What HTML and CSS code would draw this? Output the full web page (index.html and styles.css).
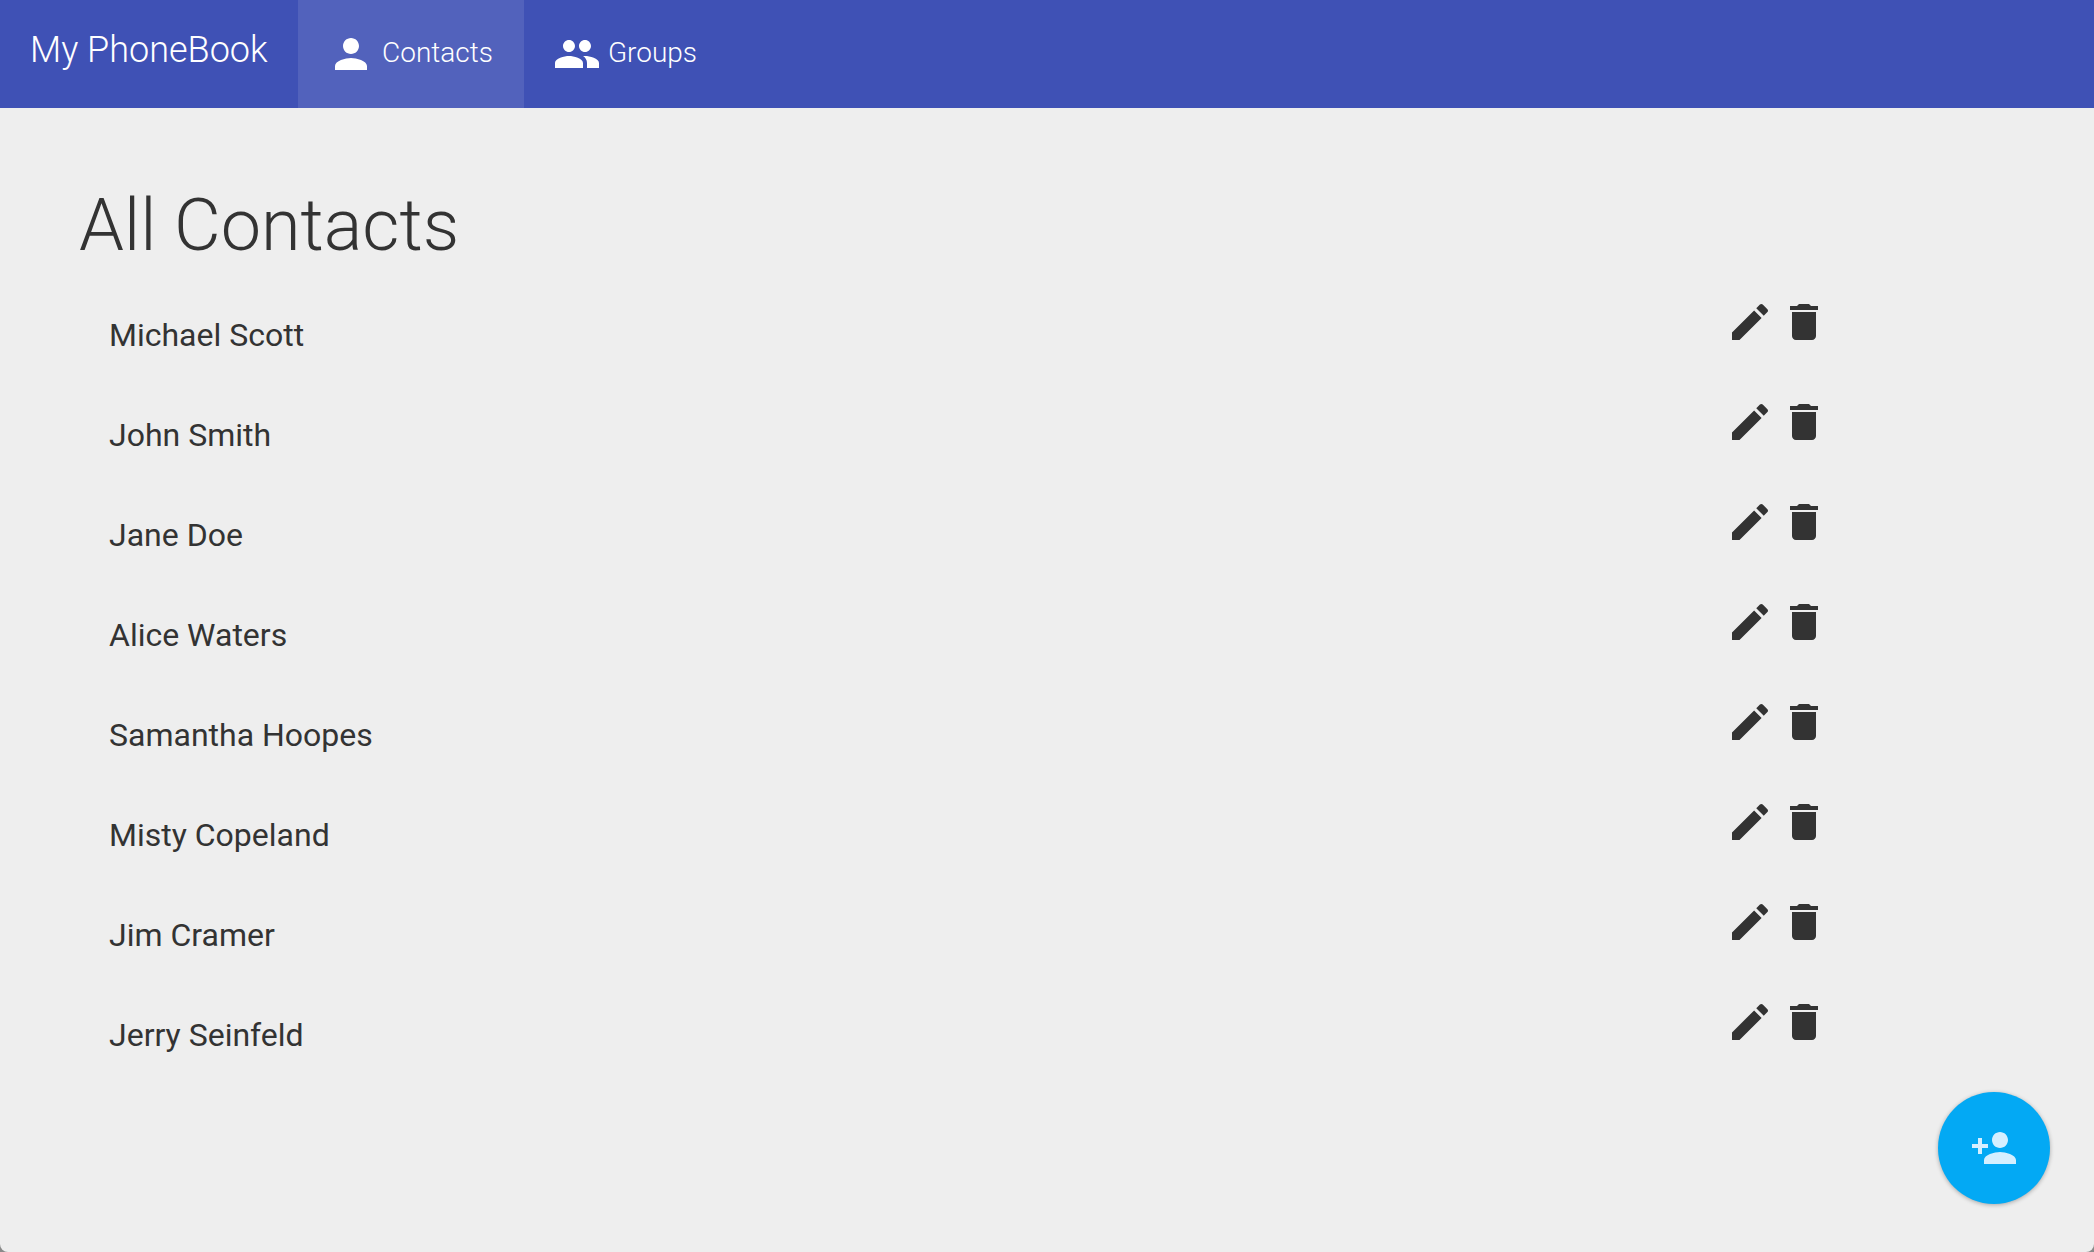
FILE: index.html
```html
<!DOCTYPE html>
<html lang="en">

<head>
    <meta charset="UTF-8">
    <meta name="viewport" content="width=device-width, initial-scale=1.0">
    <title>My PhoneBook</title>

    <link rel="stylesheet" href="styles.css">
</head>

<body>
    <header class="navbar">
        <a class="brand" href="#">My PhoneBook</a>
        <a class="tab active" href="#">
            <svg class="ico" viewBox="0 0 24 24"><path d="M12 12c2.21 0 4-1.79 4-4s-1.79-4-4-4-4 1.79-4 4 1.79 4 4 4zm0 2c-2.67 0-8 1.34-8 4v2h16v-2c0-2.66-5.33-4-8-4z"/></svg>
            Contacts
        </a>
        <a class="tab" href="#">
            <svg class="ico" viewBox="0 0 24 24"><path d="M16 11c1.66 0 2.99-1.34 2.99-3S17.66 5 16 5c-1.66 0-3 1.34-3 3s1.34 3 3 3zm-8 0c1.66 0 2.99-1.34 2.99-3S9.66 5 8 5C6.34 5 5 6.34 5 8s1.34 3 3 3zm0 2c-2.33 0-7 1.17-7 3.5V19h14v-2.5c0-2.33-4.67-3.5-7-3.5zm8 0c-.29 0-.62.02-.97.05 1.16.84 1.97 1.97 1.97 3.45V19h6v-2.5c0-2.33-4.67-3.5-7-3.5z"/></svg>
            Groups
        </a>
    </header>

    <main class="content">
        <h1 class="title">All Contacts</h1>

        <ul class="contacts">
            <li class="contact">
                <span class="name">Michael Scott</span>
                <span class="actions">
                    <svg class="ico" viewBox="0 0 24 24"><path d="M3 17.25V21h3.75L17.81 9.94l-3.75-3.75L3 17.25zM20.71 7.04c.39-.39.39-1.02 0-1.41l-2.34-2.34c-.39-.39-1.02-.39-1.41 0l-1.83 1.83 3.75 3.75 1.83-1.83z"/></svg>
                    <svg class="ico" viewBox="0 0 24 24"><path d="M6 19c0 1.1.9 2 2 2h8c1.1 0 2-.9 2-2V7H6v12zM19 4h-3.5l-1-1h-5l-1 1H5v2h14V4z"/></svg>
                </span>
            </li>
            <li class="contact">
                <span class="name">John Smith</span>
                <span class="actions">
                    <svg class="ico" viewBox="0 0 24 24"><path d="M3 17.25V21h3.75L17.81 9.94l-3.75-3.75L3 17.25zM20.71 7.04c.39-.39.39-1.02 0-1.41l-2.34-2.34c-.39-.39-1.02-.39-1.41 0l-1.83 1.83 3.75 3.75 1.83-1.83z"/></svg>
                    <svg class="ico" viewBox="0 0 24 24"><path d="M6 19c0 1.1.9 2 2 2h8c1.1 0 2-.9 2-2V7H6v12zM19 4h-3.5l-1-1h-5l-1 1H5v2h14V4z"/></svg>
                </span>
            </li>
            <li class="contact">
                <span class="name">Jane Doe</span>
                <span class="actions">
                    <svg class="ico" viewBox="0 0 24 24"><path d="M3 17.25V21h3.75L17.81 9.94l-3.75-3.75L3 17.25zM20.71 7.04c.39-.39.39-1.02 0-1.41l-2.34-2.34c-.39-.39-1.02-.39-1.41 0l-1.83 1.83 3.75 3.75 1.83-1.83z"/></svg>
                    <svg class="ico" viewBox="0 0 24 24"><path d="M6 19c0 1.1.9 2 2 2h8c1.1 0 2-.9 2-2V7H6v12zM19 4h-3.5l-1-1h-5l-1 1H5v2h14V4z"/></svg>
                </span>
            </li>
            <li class="contact">
                <span class="name">Alice Waters</span>
                <span class="actions">
                    <svg class="ico" viewBox="0 0 24 24"><path d="M3 17.25V21h3.75L17.81 9.94l-3.75-3.75L3 17.25zM20.71 7.04c.39-.39.39-1.02 0-1.41l-2.34-2.34c-.39-.39-1.02-.39-1.41 0l-1.83 1.83 3.75 3.75 1.83-1.83z"/></svg>
                    <svg class="ico" viewBox="0 0 24 24"><path d="M6 19c0 1.1.9 2 2 2h8c1.1 0 2-.9 2-2V7H6v12zM19 4h-3.5l-1-1h-5l-1 1H5v2h14V4z"/></svg>
                </span>
            </li>
            <li class="contact">
                <span class="name">Samantha Hoopes</span>
                <span class="actions">
                    <svg class="ico" viewBox="0 0 24 24"><path d="M3 17.25V21h3.75L17.81 9.94l-3.75-3.75L3 17.25zM20.71 7.04c.39-.39.39-1.02 0-1.41l-2.34-2.34c-.39-.39-1.02-.39-1.41 0l-1.83 1.83 3.75 3.75 1.83-1.83z"/></svg>
                    <svg class="ico" viewBox="0 0 24 24"><path d="M6 19c0 1.1.9 2 2 2h8c1.1 0 2-.9 2-2V7H6v12zM19 4h-3.5l-1-1h-5l-1 1H5v2h14V4z"/></svg>
                </span>
            </li>
            <li class="contact">
                <span class="name">Misty Copeland</span>
                <span class="actions">
                    <svg class="ico" viewBox="0 0 24 24"><path d="M3 17.25V21h3.75L17.81 9.94l-3.75-3.75L3 17.25zM20.71 7.04c.39-.39.39-1.02 0-1.41l-2.34-2.34c-.39-.39-1.02-.39-1.41 0l-1.83 1.83 3.75 3.75 1.83-1.83z"/></svg>
                    <svg class="ico" viewBox="0 0 24 24"><path d="M6 19c0 1.1.9 2 2 2h8c1.1 0 2-.9 2-2V7H6v12zM19 4h-3.5l-1-1h-5l-1 1H5v2h14V4z"/></svg>
                </span>
            </li>
            <li class="contact">
                <span class="name">Jim Cramer</span>
                <span class="actions">
                    <svg class="ico" viewBox="0 0 24 24"><path d="M3 17.25V21h3.75L17.81 9.94l-3.75-3.75L3 17.25zM20.71 7.04c.39-.39.39-1.02 0-1.41l-2.34-2.34c-.39-.39-1.02-.39-1.41 0l-1.83 1.83 3.75 3.75 1.83-1.83z"/></svg>
                    <svg class="ico" viewBox="0 0 24 24"><path d="M6 19c0 1.1.9 2 2 2h8c1.1 0 2-.9 2-2V7H6v12zM19 4h-3.5l-1-1h-5l-1 1H5v2h14V4z"/></svg>
                </span>
            </li>
            <li class="contact">
                <span class="name">Jerry Seinfeld</span>
                <span class="actions">
                    <svg class="ico" viewBox="0 0 24 24"><path d="M3 17.25V21h3.75L17.81 9.94l-3.75-3.75L3 17.25zM20.71 7.04c.39-.39.39-1.02 0-1.41l-2.34-2.34c-.39-.39-1.02-.39-1.41 0l-1.83 1.83 3.75 3.75 1.83-1.83z"/></svg>
                    <svg class="ico" viewBox="0 0 24 24"><path d="M6 19c0 1.1.9 2 2 2h8c1.1 0 2-.9 2-2V7H6v12zM19 4h-3.5l-1-1h-5l-1 1H5v2h14V4z"/></svg>
                </span>
            </li>
        </ul>
    </main>

    <a class="fab" href="#">
        <svg class="ico" viewBox="0 0 24 24"><path d="M15 12c2.21 0 4-1.79 4-4s-1.79-4-4-4-4 1.79-4 4 1.79 4 4 4zm-9-2V7H4v3H1v2h3v3h2v-3h3v-2H6zm9 4c-2.67 0-8 1.34-8 4v2h16v-2c0-2.66-5.33-4-8-4z"/></svg>
    </a>
</body>

</html>
```

FILE: styles.css
```css
html {
    height: 100%;
    background-color: #8a8a8a;
}

body {
    margin: 0;
    height: 1252px;
    overflow: hidden;
    border-radius: 0 0 8px 8px;
    background-color: #eeeeee;
    color: #333333;
    font-family: Roboto, "Liberation Sans", sans-serif;
}

.ico {
    width: 48px;
    height: 48px;
    flex: none;
    fill: currentColor;
}

.navbar {
    display: flex;
    height: 108px;
    background-color: #3f51b5;
    color: #ffffff;
}

.navbar a {
    color: #ffffff;
    text-decoration: none;
}

.brand {
    width: 268px;
    padding: 27px 0 0 30px;
    font-size: 36px;
    line-height: 46px;
    font-weight: 300;
}

.tab {
    display: flex;
    align-items: flex-start;
    gap: 7px;
    padding: 30px 31px 0 29px;
    font-size: 28px;
    line-height: 46px;
    font-weight: 300;
}

.tab.active {
    background-color: #5262bc;
}

.content {
    padding: 0 266px 0 79px;
}

.title {
    margin: 0;
    padding-top: 76px;
    font-size: 72px;
    line-height: 84px;
    font-weight: 300;
}

.contacts {
    margin: 30px 0 0;
    padding: 0 0 0 30px;
    list-style: none;
}

.contact {
    display: flex;
    justify-content: space-between;
    height: 100px;
}

.name {
    padding-top: 13px;
    font-size: 32px;
    line-height: 48px;
}

.actions {
    display: flex;
    gap: 6px;
}

.fab {
    position: absolute;
    left: 1938px;
    top: 1092px;
    display: flex;
    align-items: center;
    justify-content: center;
    width: 112px;
    height: 112px;
    border-radius: 50%;
    background-color: #03a9f4;
    color: #d5efff;
    box-shadow: 0 1px 4px rgba(0, 0, 0, 0.3);
}
```
